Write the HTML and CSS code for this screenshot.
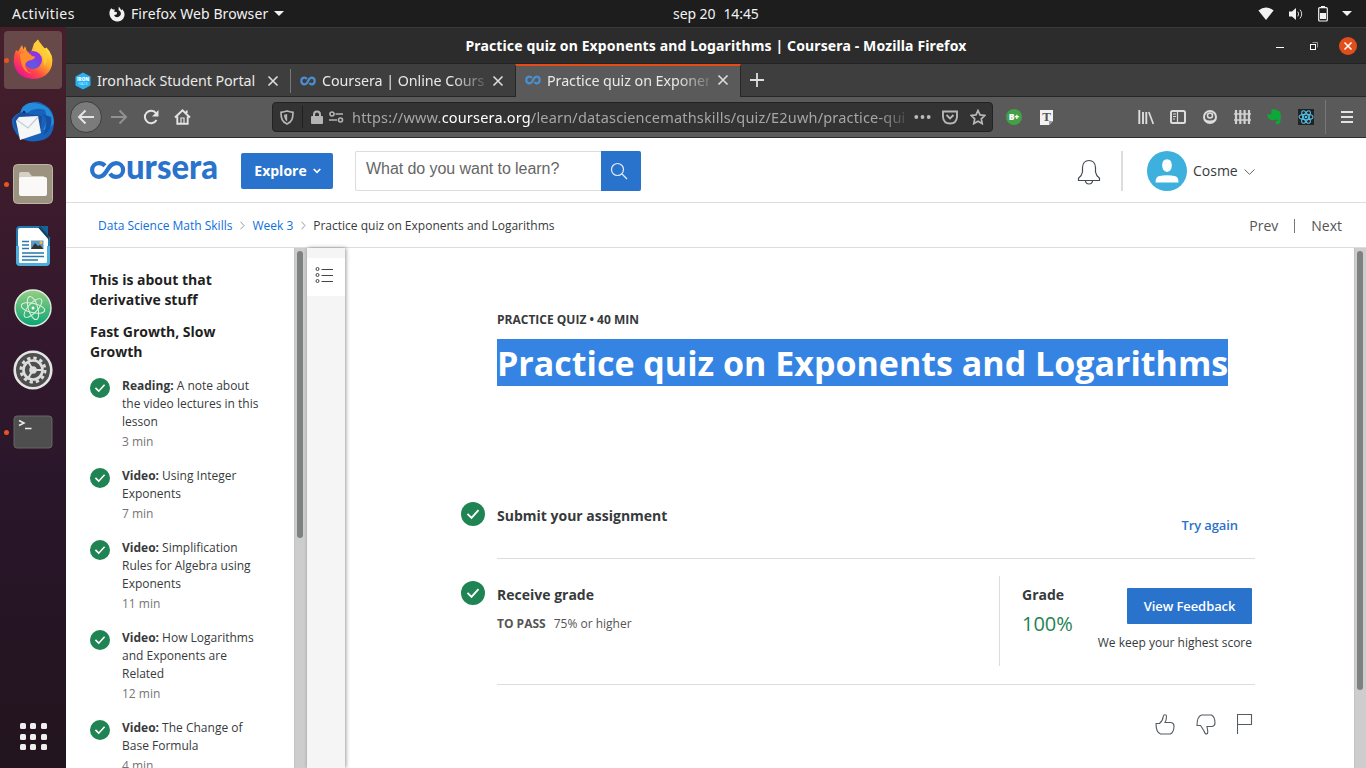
FILE: index.html
```html
<!DOCTYPE html>
<html lang="en">
<head>
<meta charset="utf-8">
<title>Practice quiz on Exponents and Logarithms | Coursera</title>
<link rel="stylesheet" href="styles.css">
</head>
<body>
<svg class="defs" width="0" height="0" aria-hidden="true">
  <symbol id="check" viewBox="0 0 24 24"><circle cx="12" cy="12" r="12" fill="#1f8354"/><path d="M6.500 11.800l4 4 7-7.600" fill="none" stroke="#fff" stroke-width="1.900"/></symbol>
  <symbol id="infinity" viewBox="0 0 16 10"><path d="M7 3C4.800.7 1.300 1.700 1.300 5s3.500 4.300 5.500 2.200L9.300 3C11.300.7 14.700 1.700 14.700 5s-3.300 4.300-5.400 2" fill="none" stroke="#4a8fd0" stroke-width="2.200"/></symbol>
  <symbol id="close" viewBox="0 0 12 12"><path d="M1.500 1.500l9 9m0-9l-9 9" fill="none" stroke="#dedede" stroke-width="1.600"/></symbol>
</svg>

<header class="topbar">
  <span class="activities">Activities</span>
  <span class="appmenu">
    <svg width="16" height="16" viewBox="0 0 16 16"><path d="M2.200 2.200C-.8 6 .2 11 3.400 13.700 7 16.500 12 16 14.300 12.600 16.500 9.300 15.600 5.200 13 3L12.600 4.400 9.800.4 9.500 4.200C12 5.300 12.600 8 11 9.800 9.500 11.800 6 11.600 5.100 9.300L7.800 8.300 8 6.300 5 5.500 6 3.500 4 3.600z" fill="#f2f2f2"/></svg>
    <span class="applabel">Firefox Web Browser</span>
    <i class="caret"></i>
  </span>
  <span class="clock"><span>sep 20</span><span>14:45</span></span>
  <span class="tray">
    <svg width="16" height="14" viewBox="0 0 16 14"><path d="M.4 3.500Q8-2.500 15.600 3.500L8 13z" fill="#f2f2f2"/></svg>
    <svg width="16" height="14" viewBox="0 0 16 14"><path d="M1 4.500h3L8 1v12L4 9.500H1z" fill="#f2f2f2"/><path d="M9.800 4.600q1.700 2.400 0 4.800M12 2.600q3.400 4.400 0 8.800" stroke="#d8d8d8" fill="none"/></svg>
    <svg width="10" height="16" viewBox="0 0 10 16"><path d="M3 0h4v2H3z" fill="#f2f2f2"/><rect x=".7" y="1.700" width="8.600" height="13.300" rx="1" fill="none" stroke="#f2f2f2" stroke-width="1.200"/><path d="M2 7h6v6H2z" fill="#f2f2f2"/></svg>
    <i class="caret"></i>
  </span>
</header>

<div class="desktop">
  <nav class="dock">
    <div class="app active running">
      <svg width="42" height="42" viewBox="0 0 42 42">
        <defs>
          <linearGradient id="ff" x1=".85" y1=".1" x2=".2" y2=".9"><stop offset="0" stop-color="#fff04a"/><stop offset=".4" stop-color="#ffab28"/><stop offset=".7" stop-color="#ff4d42"/><stop offset="1" stop-color="#ef168c"/></linearGradient>
          <radialGradient id="globe" cx=".5" cy=".8"><stop offset="0" stop-color="#5362e4"/><stop offset="1" stop-color="#8b35e5"/></radialGradient>
        </defs>
        <path d="M6 12.500L10 6l1.500 4.500L13 7l2 5.500 4 1L22 4.500 26 .5q2 6 7 9l1.500-1Q42 16 40 26 36.500 39.500 21 40 5 39 2 25 1 18 4 11z" fill="url(#ff)"/>
        <circle cx="21" cy="21" r="9" fill="url(#globe)"/>
        <path d="M8 15q8-4 12 2l3 .5q0 3-6 4-4 2-4 5 1 6 7 8Q9 34 8 15z" fill="#ff8d2b"/>
        <path d="M21 12q12-1 11 15 6-8 1-17L26 1q-5 5-3 9l-2 2z" fill="#ffcb37"/>
      </svg>
    </div>
    <div class="app">
      <svg width="42" height="42" viewBox="0 0 42 42">
        <path d="M16 3q8-5 17 1 9 5 9 17 0 14-11 18-14 4-24-3Q-1 27 0 18q4-6 10-7z" fill="#1763b9"/>
        <path d="M17 2q-7 2-9 10l5 3Q20 5 33 9q4 11-2 20 9-1 11-8Q40 1 17 2z" fill="#258bdb"/>
        <path d="M2 19Q8 7 17 13l13 2-1 12-14 8Q2 30 2 19z" fill="#1b4f9d"/>
        <path d="M4 20l3-4 19-1 3 17-21 7z" fill="#f5f6f8"/><path d="M5 19l11 8 10-11" stroke="#c4cbd6" fill="none" stroke-width="1.200"/><path d="M30 13q8 5 1 21 10-5 8-18" fill="#1550a4"/><circle cx="12" cy="11" r="1.200" fill="#082e69"/>
      </svg>
    </div>
    <div class="app running">
      <svg width="40" height="40" viewBox="0 0 40 40"><rect x=".5" y=".5" width="39" height="39" rx="4" fill="#9b927f" stroke="#beb6a5"/><path d="M6 10q0-2 2-2h7q2 0 2 2l2 2h12v12H6z" fill="#d7d1c5"/><rect x="6" y="13" width="28" height="19" rx="2" fill="#faf9f7"/></svg>
    </div>
    <div class="app">
      <svg width="34" height="40" viewBox="0 0 34 40"><path d="M4 1h19l10 11v24q0 3-3 3H4q-3 0-3-3V4q0-3 3-3z" fill="#fff" stroke="#2079b1" stroke-width="2"/><path d="M24 0h8v9z" fill="#126499"/><path d="M22 1h2l9 10v3z" fill="#0c405e"/><path d="M1.500 20v16q0 2.500 3 2.500h25q3 0 3-2.500V20" fill="none" stroke="#4fafdc" stroke-width="3"/><path d="M6 15.500h7M6 19h7M6 22.500h7M6 27h22M6 30.500h22M6 34h16" stroke="#2878aa" stroke-width="1.500"/><rect x="15" y="14.500" width="12.500" height="8.500" fill="#5d9ac4"/><path d="M15 23l4-6 3 3 2-1 3.500 4z" fill="#333"/><circle cx="25" cy="16.500" r="1.500" fill="#f0be37"/></svg>
    </div>
    <div class="app">
      <svg width="38" height="38" viewBox="0 0 38 38"><defs><linearGradient id="atom" x1="0" y1="0" x2="0" y2="1"><stop stop-color="#98cf82"/><stop offset="1" stop-color="#08a575"/></linearGradient></defs><circle cx="19" cy="19" r="18" fill="url(#atom)" stroke="#e4eee4" stroke-width="1.400"/><g fill="none" stroke="#d9f1dd" stroke-width="1"><ellipse cx="19" cy="19" rx="12" ry="4.700" transform="rotate(13 19 19)"/><ellipse cx="19" cy="19" rx="12" ry="4.700" transform="rotate(73 19 19)"/><ellipse cx="19" cy="19" rx="12" ry="4.700" transform="rotate(133 19 19)"/></g><circle cx="19" cy="19" r="1.500" fill="#fff"/></svg>
    </div>
    <div class="app">
      <svg width="40" height="40" viewBox="0 0 40 40"><circle cx="20" cy="20" r="18.300" fill="#4e4e4e" stroke="#e5e5e5" stroke-width="2.600"/><circle cx="20" cy="20" r="12" fill="none" stroke="#ddd" stroke-width="3" stroke-dasharray="3.300 2.980"/><circle cx="20" cy="20" r="9.500" fill="none" stroke="#ddd" stroke-width="2.600"/><circle cx="20" cy="20" r="3.800" fill="#ddd"/><path d="M20 20h9M20 20l-5-8.500M20 20l-5 8.500" stroke="#ddd" stroke-width="2"/></svg>
    </div>
    <div class="app running">
      <svg width="40" height="34" viewBox="0 0 40 34"><rect x="1" y="1" width="38" height="32" rx="3" fill="#4e4e4e" stroke="#666"/><path d="M6 5.500l5 2.500-5 2.500M12 13.500h6.500" fill="none" stroke="#eee" stroke-width="1.500"/></svg>
    </div>
    <div class="launcher"><i></i><i></i><i></i><i></i><i></i><i></i><i></i><i></i><i></i></div>
  </nav>

  <section class="window">
    <div class="titlebar">
      <span class="wintitle">Practice quiz on Exponents and Logarithms | Coursera - Mozilla Firefox</span>
      <span class="wincontrols">
        <svg width="8" height="8"><path d="M0 5.500h8" stroke="#fff"/></svg>
        <svg width="8" height="8" viewBox="0 0 8 8"><path d="M2.500.5h5v5" fill="none" stroke="#999"/><rect x=".5" y="2.500" width="5" height="5" fill="none" stroke="#fff"/></svg>
        <svg width="18" height="18" viewBox="0 0 18 18"><circle cx="9" cy="9" r="9" fill="#e24e1b"/><path d="M5.500 5.500l7 7m0-7l-7 7" stroke="#fff" stroke-width="1.500"/></svg>
      </span>
    </div>

    <div class="tabs">
      <div class="tab first">
        <svg width="16" height="18" viewBox="0 0 16 18"><path d="M8 .5l7.500 4v9L8 17.500l-7.500-4v-9z" fill="#29b3f3"/><text x="8" y="9" text-anchor="middle" font-family="Open Sans, sans-serif" font-weight="800" font-size="4.500" fill="#fff">IRON</text><text x="8" y="12.500" text-anchor="middle" font-family="Open Sans, sans-serif" font-size="3.500" fill="#c7edff">HACK</text></svg>
        <span class="tabname">Ironhack Student Portal</span>
        <svg class="x" width="12" height="12"><use href="#close"/></svg>
      </div>
      <div class="tab second">
        <svg width="16" height="10"><use href="#infinity"/></svg>
        <span class="tabname fade">Coursera | Online Courses</span>
        <svg class="x" width="12" height="12"><use href="#close"/></svg>
      </div>
      <div class="tab current">
        <svg width="16" height="10"><use href="#infinity"/></svg>
        <span class="tabname fade">Practice quiz on Exponents</span>
        <svg class="x" width="12" height="12"><use href="#close"/></svg>
      </div>
      <svg class="newtab" width="14" height="14"><path d="M7 0v14M0 7h14" stroke="#dedede" stroke-width="1.800"/></svg>
    </div>

    <div class="toolbar">
      <div class="navbuttons">
        <span class="back"><svg width="18" height="16" viewBox="0 0 18 16"><path d="M17 8H2M8.500 1.500L2 8l6.500 6.500" fill="none" stroke="#e4e4e4" stroke-width="2"/></svg></span>
        <svg class="forward" width="18" height="16" viewBox="0 0 18 16"><path d="M1 8h15M9.500 1.500L16 8l-6.500 6.500" fill="none" stroke="#919191" stroke-width="2"/></svg>
        <svg width="16" height="16" viewBox="0 0 16 16"><path d="M13 4.200A6.200 6.200 0 1 0 13.500 11" fill="none" stroke="#e4e4e4" stroke-width="2"/><path d="M15.500 1v6.500H9z" fill="#e4e4e4"/></svg>
        <svg class="home" width="17" height="16" viewBox="0 0 17 16"><path d="M1 8.500L8.500 1.300 16 8.500M3.300 7.500v7.300h10.400V7.500M12.700 4V1.500" fill="none" stroke="#e4e4e4" stroke-width="1.900"/><path d="M7 9h3v5.500H7z" fill="none" stroke="#e4e4e4" stroke-width="1.200"/></svg>
      </div>
      <div class="urlbar">
        <svg class="shield" width="14" height="15" viewBox="0 0 14 15"><path d="M7 1Q10 2 13 2.300C13 8.500 12 12 7 14 2 12 1 8.500 1 2.300 4 2 7 1 7 1z" fill="none" stroke="#b4b4b4" stroke-width="1.700"/><path d="M7.200 4v7.500Q4.200 10 4 4.700z" fill="#b4b4b4"/></svg>
        <i class="rule"></i>
        <svg width="12" height="15" viewBox="0 0 12 15"><rect y="6" width="12" height="8" rx="1" fill="#b4b4b4"/><path d="M3 7V4.500q0-3 3-3t3 3V7" fill="none" stroke="#b4b4b4" stroke-width="2"/></svg>
        <svg class="perm" width="15" height="12" viewBox="0 0 15 12"><g fill="none" stroke="#b4b4b4" stroke-width="1.600"><circle cx="3" cy="3" r="2"/><path d="M6.500 3H14M0 9h8"/><circle cx="11.500" cy="9" r="2"/></g></svg>
        <span class="address">https://www.<b>coursera.org</b>/learn/datasciencemathskills/quiz/E2uwh/practice-quiz</span>
        <svg width="17" height="6"><g fill="#bbb"><circle cx="2.300" cy="3" r="1.900"/><circle cx="8.500" cy="3" r="1.900"/><circle cx="14.700" cy="3" r="1.900"/></g></svg>
        <svg class="pocket" width="16" height="15" viewBox="0 0 16 15"><path d="M1 1.500h14V7q-.5 6.500-7 6.500T1 7zM4.500 5L8 8.500 11.500 5" fill="none" stroke="#b7b7b7" stroke-width="1.900"/></svg>
        <svg class="star" width="16" height="16" viewBox="0 0 16 16"><path d="M8 1.500l2 4.400 4.800.6-3.500 3.300.9 4.800L8 12.200l-4.200 2.400.9-4.800L1.200 6.500 6 5.900z" fill="none" stroke="#b7b7b7" stroke-width="1.700"/></svg>
      </div>
      <svg class="bplus" width="16" height="16"><circle cx="8" cy="8" r="8" fill="#43a047"/><text x="8" y="11" text-anchor="middle" font-family="Open Sans, sans-serif" font-size="8.500" font-weight="800" fill="#fff">B+</text></svg>
      <svg class="textext" width="13" height="15"><path d="M0 0h13v11l-4 4H0z" fill="#f2f2f2"/><path d="M9 15v-4h4z" fill="#999"/><text x="6.500" y="11" text-anchor="middle" font-family="Liberation Serif, serif" font-size="13" font-weight="700" fill="#555">T</text></svg>
      <div class="extensions">
        <svg width="17" height="15" viewBox="0 0 17 15"><path d="M1.300 0v14M5 2v12M8.300 2v12" stroke="#ddd" stroke-width="1.900"/><path d="M10.800 2l4.500 12" stroke="#ddd" stroke-width="1.700"/></svg>
        <svg width="16" height="14" viewBox="0 0 16 14"><rect x="1" y="1" width="14" height="12" rx="1.500" fill="none" stroke="#ddd" stroke-width="2"/><path d="M7.500 1v12M3 4h3M3 6.500h3M3 9h2" stroke="#ddd" stroke-width="1.200"/></svg>
        <svg width="14" height="14" viewBox="0 0 14 14"><circle cx="7" cy="7" r="6" fill="none" stroke="#ddd" stroke-width="2"/><circle cx="7" cy="5.500" r="2.500" fill="none" stroke="#ddd" stroke-width="1.500"/><path d="M2 9q5 3 10 0-2 4-5 4T2 9z" fill="#ddd"/></svg>
        <svg width="17" height="15" viewBox="0 0 17 15"><path d="M2 0v14M6.300 0v14M10.600 0v14M15 0v14" stroke="#d1d1d1" stroke-width="2.200"/><path d="M0 4h17M0 10h17" stroke="#d1d1d1" stroke-width="1.700"/></svg>
        <svg width="14" height="16" viewBox="0 0 14 16"><path d="M4.500.5Q9-.5 10 1.500q3.500 0 3.700 4 .5 6-1.200 9-1.500 1.500-3 .5-1.500-1.500-.5-3h2v-1.500q-2.500 1.500-3-.5-1.500 2-4 1Q.5 9.500.2 5.500L4.500 5z" fill="#0da937"/></svg>
        <svg width="16" height="16" viewBox="0 0 16 16"><rect width="16" height="16" fill="#222"/><g fill="none" stroke="#55c0e6" stroke-width="1.100"><ellipse cx="8" cy="8" rx="7" ry="2.700"/><ellipse cx="8" cy="8" rx="7" ry="2.700" transform="rotate(60 8 8)"/><ellipse cx="8" cy="8" rx="7" ry="2.700" transform="rotate(120 8 8)"/></g><circle cx="8" cy="8" r="1.300" fill="#55c0e6"/></svg>
      </div>
      <div class="menu"><svg width="12" height="12"><path d="M0 1h12M0 6h12M0 11h12" stroke="#e2e2e2" stroke-width="2"/></svg></div>
    </div>

    <div class="page">
      <header class="site">
        <svg class="logo" width="130" height="24" viewBox="0 0 130 24"><path d="M16 6.700C14 4.600 11.800 4.100 10 4.100 6 4.100 3.100 7.200 3.100 11S6 17.900 10 17.900C18.500 17.900 18 4.100 27.200 4.100c4 0 6.900 3.100 6.900 6.900s-2.900 6.900-6.900 6.900c-3 0-5-1.400-6.200-3.300" fill="none" stroke="#2a73cc" stroke-width="4.200"/><text x="37" y="20" textLength="92" lengthAdjust="spacingAndGlyphs" font-family="Lato, sans-serif" font-weight="900" font-size="33.500" fill="#2a73cc">ursera</text></svg>
        <button class="explore">Explore <svg width="8" height="6"><path d="M.7 1l3.300 3.300L7.300 1" fill="none" stroke="#fff" stroke-width="1.700"/></svg></button>
        <div class="search"><span>What do you want to learn?</span><button><svg width="18" height="18" viewBox="0 0 18 18"><circle cx="7.500" cy="7.500" r="6" fill="none" stroke="#e3edf9" stroke-width="1.200"/><path d="M12 12l5 5" stroke="#e3edf9" stroke-width="1.200"/></svg></button></div>
        <svg class="bell" width="24" height="26" viewBox="0 0 24 26"><path d="M1.500 21.500v-2.300Q5 16.500 5.500 13V8.500Q6 1.500 12 1.500t6.500 7V13q.5 3.500 4 6.200v2.300zM8.500 21.800q.3 3.200 3.500 3.200t3.500-3.200" fill="none" stroke="#444b55" stroke-width="1.200"/></svg>
        <i class="divider"></i>
        <svg class="avatar" width="40" height="40" viewBox="0 0 40 40"><circle cx="20" cy="20" r="20" fill="#3db0de"/><path d="M20 8.300q4.800 0 4.800 6T20 21q-4.800-.7-4.800-6.700t4.800-6z" fill="#fff"/><path d="M8.500 31.500q.2-5.500 3-6.300 8.500-2 17 0 3 1 3 6.300z" fill="#fff"/></svg>
        <span class="user">Cosme</span>
        <svg width="11" height="6" viewBox="0 0 11 6"><path d="M.5.5l5 4.800 5-4.800" fill="none" stroke="#666"/></svg>
      </header>

      <div class="crumbs">
        <a>Data Science Math Skills</a>
        <svg width="5" height="9"><path d="M.5.7l3.500 3.800L.5 8.300" fill="none" stroke="#999"/></svg>
        <a>Week 3</a>
        <svg width="5" height="9"><path d="M.5.7l3.500 3.800L.5 8.300" fill="none" stroke="#999"/></svg>
        <span>Practice quiz on Exponents and Logarithms</span>
        <nav class="pager"><span>Prev</span><i></i><span>Next</span></nav>
      </div>

      <div class="columns">
        <aside class="lessons">
          <h2>This is about that<br>derivative stuff</h2>
          <h2>Fast Growth, Slow<br>Growth</h2>
          <ul>
            <li><svg width="20" height="20"><use href="#check"/></svg><div><b>Reading:</b> A note about<br>the video lectures in this<br>lesson<small>3 min</small></div></li>
            <li><svg width="20" height="20"><use href="#check"/></svg><div><b>Video:</b> Using Integer<br>Exponents<small>7 min</small></div></li>
            <li><svg width="20" height="20"><use href="#check"/></svg><div><b>Video:</b> Simplification<br>Rules for Algebra using<br>Exponents<small>11 min</small></div></li>
            <li><svg width="20" height="20"><use href="#check"/></svg><div><b>Video:</b> How Logarithms<br>and Exponents are<br>Related<small>12 min</small></div></li>
            <li><svg width="20" height="20"><use href="#check"/></svg><div><b>Video:</b> The Change of<br>Base Formula<small>4 min</small></div></li>
          </ul>
        </aside>
        <div class="scroll left"><i></i></div>
        <div class="rail"><span><svg width="18" height="18" viewBox="0 0 18 18"><g fill="none" stroke="#444"><circle cx="2.500" cy="3" r="1.500"/><circle cx="2.500" cy="9" r="1.500"/><circle cx="2.500" cy="15" r="1.500"/><path d="M6.500 3.500H18M6.500 9.500H18M6.500 15.500H18"/></g></svg></span></div>
        <main class="content">
          <div class="kind">PRACTICE QUIZ • 40 MIN</div>
          <h1><span>Practice quiz on Exponents and Logarithms</span></h1>
          <section class="step submit">
            <svg class="done" width="24" height="24"><use href="#check"/></svg>
            <h3>Submit your assignment</h3>
            <a class="retry">Try again</a>
          </section>
          <section class="step receive">
            <svg class="done" width="24" height="24"><use href="#check"/></svg>
            <div class="info"><h3>Receive grade</h3><p><b>TO PASS</b>75% or higher</p></div>
            <div class="grade">
              <div><h3>Grade</h3><strong>100%</strong></div>
              <div class="feedback"><button>View Feedback</button><span>We keep your highest score</span></div>
            </div>
          </section>
          <div class="reactions">
            <svg width="20" height="21" viewBox="0 0 20 21"><path d="M1 9.500h3.500Q8 6.500 8.200 2.500 8.500.7 10 .7t1.500 1.800Q11.500 6 10 8.500h6q3 .5 3 3.500 0 6-3.500 8H5.500Q1 18.500 1 9.500z" fill="none" stroke="#555b62" stroke-width="1.100"/></svg>
            <svg width="20" height="21" viewBox="0 0 20 21"><path d="M1 11.500h3.500Q6 13.500 8 17q1 3.200 2.500 3t1.300-2.500L11 12.500h5q3-.5 3-3.500 0-6-3.500-8H5.500Q1 2.500 1 11.500z" fill="none" stroke="#555b62" stroke-width="1.100"/></svg>
            <svg width="16" height="20" viewBox="0 0 16 20"><path d="M.5 20V.5h14v10H.5" fill="none" stroke="#555b62" stroke-width="1.100"/></svg>
          </div>
        </main>
        <div class="scroll right"><i></i></div>
      </div>
    </div>
  </section>
</div>
</body>
</html>
```

FILE: styles.css
```css
* { box-sizing: border-box; }
body { margin: 0; width: 1366px; height: 768px; overflow: hidden; display: flex; flex-direction: column; font-family: "Open Sans", "Noto Sans", sans-serif; white-space: nowrap; color: #373a3c; background: #fff; }
svg { display: block; flex: none; }
.defs { position: absolute; }
h1, h2, h3, p, ul { margin: 0; padding: 0; }
button { border: 0; padding: 0; font-family: inherit; color: #fff; background: #2a73cc; }

/* Desktop panel */
.topbar { flex: none; height: 27px; background: #1d1d1d; color: #f2f2f2; display: grid; grid-template-columns: 109px 564px 195px 1fr; align-items: center; font: 14px/26px "Noto Sans", sans-serif; }
.activities { padding-left: 12px; letter-spacing: .45px; }
.appmenu { display: flex; align-items: center; gap: 6px; letter-spacing: .1px; }
.caret { border: 5px solid transparent; border-top-color: #f2f2f2; border-bottom: 0; }
.clock { display: flex; gap: 8px; letter-spacing: -.08px; }
.tray { justify-self: end; display: flex; align-items: center; gap: 14px; margin-right: 14px; }

.desktop { flex: 1; min-height: 0; display: flex; }
.dock { flex: none; width: 66px; padding-top: 2px; display: flex; flex-direction: column; align-items: center; background: linear-gradient(#461f2b, #33182d 42%, #29162a 62%, #22141e); }
.app { width: 58px; height: 58px; margin: 2px 0; display: flex; align-items: center; justify-content: center; border-radius: 4px; position: relative; }
.active { background: #684949; }
.running::before { content: ""; position: absolute; left: 0; top: 27px; width: 5px; height: 5px; border-radius: 50%; background: #e95420; }
.launcher { margin-top: auto; margin-bottom: 18px; display: grid; grid-template-columns: repeat(3, 6px); gap: 4.500px; }
.launcher i { height: 6px; border-radius: 1.500px; background: #f1eeee; }

/* Browser chrome */
.window { flex: 1; min-width: 0; display: flex; flex-direction: column; font-family: "Noto Sans", sans-serif; }
.titlebar { flex: none; height: 37px; border-top: 1px solid #393939; border-bottom: 1px solid #222; background: #2c2c2c; display: grid; grid-template-columns: 1fr 502px 1fr; align-items: center; color: #fff; }
.wintitle { grid-column: 2; font-size: 14px; font-weight: 700; letter-spacing: .13px; text-align: center; }
.wincontrols { justify-self: end; display: flex; align-items: center; gap: 26px; padding-right: 9px; }
.wincontrols svg:last-child { margin-left: -5px; }
.tabs { flex: none; height: 33px; background: #3e3e3e; border-bottom: 1px solid #272727; display: flex; align-items: center; }
.tab { width: 225px; height: 33px; display: flex; align-items: center; gap: 6px; padding: 1px 12px 0 9px; color: #e9e9e9; font-size: 14.300px; position: relative; }
.first { padding-right: 12px; }
.first::after { content: ""; position: absolute; right: 0; top: 5px; width: 1px; height: 24px; background: #777; }
.tabname { flex: 1; overflow: hidden; letter-spacing: -.06px; }
.fade { -webkit-mask: linear-gradient(90deg, #000 80%, #0003); mask: linear-gradient(90deg, #000 80%, #0003); }
.x { margin-left: 2px; }
.current { width: 226px; margin-left: -1px; background: #5a5a5a; border-top: 2px solid #e64b17; border-right: 1px solid #272727; border-left: 1px solid #272727; padding: 0 11px 2px 9px; }
.newtab { margin-left: 9px; }
.toolbar { flex: none; height: 41px; background: #5a5a5a; border-bottom: 1px solid #2c2c2c; display: flex; align-items: center; }
.navbuttons { width: 206px; display: flex; align-items: center; padding-left: 4px; }
.back { width: 32px; height: 32px; border-radius: 50%; border: 1px solid #3d3d3d; background: #7b7b7b; display: flex; align-items: center; justify-content: center; }
.forward { margin: 0 15px 0 8px; }
.home { margin-left: 15px; }
.urlbar { width: 721px; height: 30px; border: 1px solid #222; border-radius: 4px; background: #333; display: flex; align-items: center; padding-left: 7px; }
.rule { width: 1px; height: 22px; background: #202020; margin: 0 8px 0 8px; }
.perm { margin: 0 8px 0 6px; }
.address { width: 554px; overflow: hidden; font-size: 14.500px; letter-spacing: .18px; color: #a6a6a6; margin-right: 8px; -webkit-mask: linear-gradient(90deg, #000 95%, #0003); mask: linear-gradient(90deg, #000 95%, #0003); }
.address b { color: #fff; font-weight: 400; }
.pocket { margin: 0 12px 0 11px; }
.bplus { margin-left: 13px; }
.textext { margin-left: 18px; }
.extensions { margin-left: auto; display: grid; grid-template-columns: repeat(6, 32px); justify-items: center; align-items: center; }
.menu { margin-left: 3px; width: 41px; height: 34px; border-left: 1px solid #777; display: flex; align-items: center; justify-content: center; padding-left: 1px; }

/* Site header */
.page { flex: 1; min-height: 0; display: flex; flex-direction: column; font-family: "Open Sans", "Noto Sans", sans-serif; background: #fff; }
.site { flex: none; height: 65px; border-bottom: 1px solid #ddd; display: flex; align-items: center; padding-left: 23px; }
.logo { margin-top: 2px; }
.explore { height: 36px; width: 92px; margin-left: 22px; border-radius: 2px; font-size: 14px; font-weight: 700; display: flex; align-items: center; justify-content: center; gap: 6px; margin-top: 1px; padding-left: 1px; }
.search { margin: 1px 0 0 22px; width: 286px; height: 40px; border: 1px solid #ddd; border-right: 0; border-radius: 2px; display: flex; }
.search span { flex: 1; padding: 8px 0 0 10px; font: 16px/18px "Liberation Sans", sans-serif; letter-spacing: -.06px; color: #666; }
.search button { width: 40px; height: 40px; margin-top: -1px; padding-right: 4px; border-radius: 0 2px 2px 0; display: flex; align-items: center; justify-content: center; }
.bell { margin: 4px 0 0 436px; }
.divider { width: 2px; height: 40px; margin: 2px 24px 0 20px; background: #ddd; }
.avatar { margin-top: 2px; }
.user { font-size: 14px; margin: 0 6px 0 6px; }
.user + svg { margin-top: 3px; }
.crumbs { flex: none; height: 45px; border-bottom: 1px solid #ddd; display: flex; align-items: center; gap: 7.500px; padding: 0 24px 0 32px; font-size: 12px; }
.crumbs a { color: #0f6fde; }
.pager { margin-left: auto; display: flex; align-items: center; gap: 16px; font-size: 14px; color: #555; }
.pager i { width: 1px; height: 14px; margin-top: 1px; background: #777; }

/* Lesson list */
.columns { flex: 1; min-height: 0; display: flex; }
.lessons { width: 228px; overflow: hidden; padding: 22px 0 0 24px; }
.lessons h2 { font-size: 14px; line-height: 20px; margin-bottom: 12px; color: #1f1f1f; }
.lessons ul { list-style: none; padding-top: 3px; }
.lessons li { display: flex; gap: 12px; margin-bottom: 16px; font-size: 12px; line-height: 18px; }
.lessons li svg { margin-top: 1px; }
.lessons small { display: block; font-size: 12px; margin-top: 2px; color: #757575; }
.scroll { flex: none; width: 13px; background: #cdcdcd; border-left: 1px solid #c5c1bb; padding: 3px 0 0 2px; }
.scroll i { display: block; width: 6px; border-radius: 3px; background: #7d8180; }
.left i { height: 287px; }
.right { width: 12px; }
.right i { height: 439px; }
.rail { flex: none; width: 38px; padding-top: 10px; background: #f5f5f5; box-shadow: 1px 0 4px #0006; }
.rail span { height: 38px; background: #fff; display: flex; align-items: center; padding: 0 0 4px 8px; }

/* Assignment */
.content { flex: 1; min-width: 0; padding: 63px 99px 0 152px; }
.kind { font-size: 12px; line-height: 18px; font-weight: 700; }
h1 { font-size: 34px; line-height: 49px; height: 47px; margin-top: 10px; color: #fff; }
h1 span { display: inline-block; height: 47px; background: #3584e4; }
.step { position: relative; border-bottom: 1px solid #ddd; display: flex; justify-content: space-between; }
.step h3 { font-size: 14px; line-height: 20px; font-weight: 700; }
.done { position: absolute; left: -36px; }
.submit { height: 67px; margin-top: 106px; padding: 14px 17px 0 0; }
.submit .done { top: 10px; }
.retry { font-size: 13px; line-height: 20px; margin-top: 9px; font-weight: 600; letter-spacing: -.1px; color: #2a73cc; }
.receive { height: 126px; padding: 17px 3px 0 0; }
.receive .done { top: 22px; }
.info { padding-top: 9px; }
.info p { font-size: 12px; line-height: 18px; margin-top: 10px; color: #555; }
.info b { margin-right: 8px; }
.grade { width: 253px; height: 90px; border-left: 1px solid #ddd; padding: 9px 0 0 22px; display: flex; justify-content: space-between; }
.grade strong { display: block; font-size: 20px; line-height: 28px; font-weight: 400; margin-top: 5px; color: #1f8354; }
.feedback { display: flex; flex-direction: column; align-items: flex-end; font-size: 12px; line-height: 18px; padding-top: 3px; }
.feedback button { width: 125px; height: 36px; font-size: 13px; font-weight: 600; letter-spacing: -.08px; margin-bottom: 10px; border-radius: 1px; }
.reactions { display: flex; justify-content: flex-end; gap: 21px; padding: 29px 2px 0 0; }
```
